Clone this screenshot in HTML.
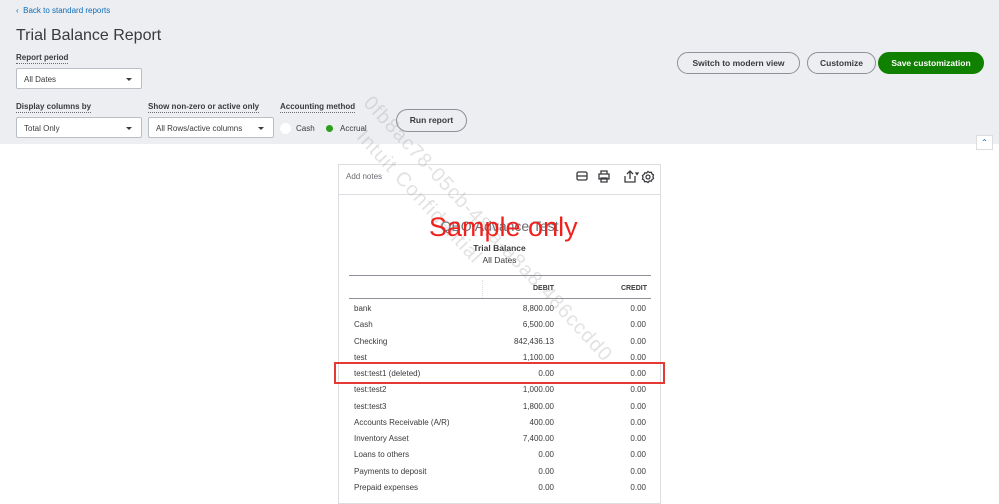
<!DOCTYPE html>
<html><head><meta charset="utf-8"><style>
*{box-sizing:border-box;margin:0;padding:0}
body{width:999px;height:493px;overflow:hidden;background:#fff;font-family:"Liberation Sans",sans-serif;color:#393a3d;position:relative}
.top{position:absolute;left:0;top:0;width:999px;height:144px;background:#eceef1}
.a{position:absolute;white-space:nowrap}
.lbl{font-size:8px;font-weight:bold;color:#393a3d;border-bottom:1px dotted #6b6c72;padding-bottom:1px}
.sel{position:absolute;background:#fff;border:1px solid #babec5;border-radius:2px;height:21px;font-size:8px;padding:6px 7px;color:#393a3d}
.sel:after{content:"";position:absolute;right:9px;top:9px;border:3px solid transparent;border-top:3px solid #393a3d}
.btn{position:absolute;border:1px solid #8d9096;border-radius:12px;height:22px;font-size:8.5px;font-weight:bold;text-align:center;line-height:20px;color:#393a3d;background:#eceef1}
.rep{position:absolute;left:338px;top:164px;width:323px;height:340px;border:1px solid #dcdde0;background:#fff}
.row{position:absolute;left:354px;width:292px;font-size:8px;color:#393a3d;height:12px}
.row span{position:absolute;top:0}
.wm{font-size:20px;color:rgba(160,160,160,.3);transform-origin:0 0;transform:rotate(47deg);letter-spacing:1px}
</style></head><body>
<div class="top"></div>
<div class="a" style="left:16px;top:6px;font-size:8px;color:#0d6eb8">&#8249;&nbsp; Back to standard reports</div>
<div class="a" style="left:16px;top:27px;font-size:16px;color:#393a3d">Trial Balance Report</div>
<div class="a lbl" style="left:16px;top:53px">Report period</div>
<div class="sel" style="left:16px;top:68px;width:126px">All Dates</div>
<div class="a lbl" style="left:16px;top:102px">Display columns by</div>
<div class="sel" style="left:16px;top:117px;width:126px">Total Only</div>
<div class="a lbl" style="left:148px;top:102px">Show non-zero or active only</div>
<div class="sel" style="left:148px;top:117px;width:126px">All Rows/active columns</div>
<div class="a lbl" style="left:280px;top:102px">Accounting method</div>
<div class="a" style="left:280px;top:123px;width:11px;height:11px;border-radius:50%;background:#fff"></div>
<div class="a" style="left:296px;top:124px;font-size:8px">Cash</div>
<div class="a" style="left:326px;top:125px;width:7px;height:7px;border-radius:50%;background:#2ca01c"></div>
<div class="a" style="left:340px;top:124px;font-size:8px">Accrual</div>
<div class="btn" style="left:396px;top:109px;width:71px;height:23px">Run report</div>
<div class="btn" style="left:677px;top:52px;width:123px">Switch to modern view</div>
<div class="btn" style="left:807px;top:52px;width:69px">Customize</div>
<div class="btn" style="left:878px;top:52px;width:106px;background:#108000;border-color:#108000;color:#fff">Save customization</div>
<div class="a" style="left:976px;top:135px;width:17px;height:15px;background:#fff;border:1px solid #dcdde0;font-size:8px;color:#0d6eb8;text-align:center;line-height:14px">&#8963;</div>
<div class="rep"></div>
<div class="a" style="left:338px;top:194px;width:323px;border-top:1px solid #dcdde0"></div>
<div class="a" style="left:346px;top:172px;font-size:8px;color:#6b6c72">Add notes</div>
<svg class="a" style="left:575px;top:169px" width="82" height="16" viewBox="0 0 82 16" fill="none" stroke="#393a3d" stroke-width="1.3">
<rect x="2" y="3" width="10" height="8" rx="1.5"/><path d="M2 7h10"/>
<path d="M26 5V2h6v3M24 5h10v5H24zM26 9h6v4h-6z"/>
<path d="M50 7v6h10V7M55 10V2M52 5l3-3 3 3M61 4l2 0-1 1.5z"/>
<circle cx="73" cy="8" r="2"/><path d="M73 2.5l1.5 1 1.8-.3.7 1.7 1.5 1-.5 1.8.5 1.8-1.5 1-.7 1.7-1.8-.3L73 13.5l-1.5-1-1.8.3-.7-1.7-1.5-1 .5-1.8-.5-1.8 1.5-1 .7-1.7 1.8.3z"/>
</svg>
<div class="a" style="left:338px;top:218px;width:323px;text-align:center;font-size:14px;color:#6b6c72">QBO Advance Test</div>
<div class="a" style="left:338px;top:243px;width:323px;text-align:center;font-size:8.5px;font-weight:bold">Trial Balance</div>
<div class="a" style="left:338px;top:255px;width:323px;text-align:center;font-size:8.5px">All Dates</div>
<div class="a" style="left:349px;top:275px;width:302px;border-top:1px solid #8d9096"></div>
<div class="a" style="left:482px;top:280px;height:18px;border-left:1px dotted #dcdde0"></div>
<div class="a" style="left:349px;top:298px;width:302px;border-top:1px solid #8d9096"></div>
<div class="a" style="left:490px;top:285px;width:64px;text-align:right;font-size:7px;font-weight:bold">DEBIT</div>
<div class="a" style="left:590px;top:285px;width:57px;text-align:right;font-size:7px;font-weight:bold">CREDIT</div>
<div class="row" style="top:304px"><span style="left:0">bank</span><span style="right:92px">8,800.00</span><span style="right:0">0.00</span></div>
<div class="row" style="top:320px"><span style="left:0">Cash</span><span style="right:92px">6,500.00</span><span style="right:0">0.00</span></div>
<div class="row" style="top:337px"><span style="left:0">Checking</span><span style="right:92px">842,436.13</span><span style="right:0">0.00</span></div>
<div class="row" style="top:353px"><span style="left:0">test</span><span style="right:92px">1,100.00</span><span style="right:0">0.00</span></div>
<div class="row" style="top:369px"><span style="left:0">test:test1 (deleted)</span><span style="right:92px">0.00</span><span style="right:0">0.00</span></div>
<div class="row" style="top:385px"><span style="left:0">test:test2</span><span style="right:92px">1,000.00</span><span style="right:0">0.00</span></div>
<div class="row" style="top:402px"><span style="left:0">test:test3</span><span style="right:92px">1,800.00</span><span style="right:0">0.00</span></div>
<div class="row" style="top:418px"><span style="left:0">Accounts Receivable (A/R)</span><span style="right:92px">400.00</span><span style="right:0">0.00</span></div>
<div class="row" style="top:434px"><span style="left:0">Inventory Asset</span><span style="right:92px">7,400.00</span><span style="right:0">0.00</span></div>
<div class="row" style="top:450px"><span style="left:0">Loans to others</span><span style="right:92px">0.00</span><span style="right:0">0.00</span></div>
<div class="row" style="top:467px"><span style="left:0">Payments to deposit</span><span style="right:92px">0.00</span><span style="right:0">0.00</span></div>
<div class="row" style="top:483px"><span style="left:0">Prepaid expenses</span><span style="right:92px">0.00</span><span style="right:0">0.00</span></div>
<div class="a" style="left:334px;top:362px;width:331px;height:22px;border:2px solid #e53935"></div>
<div class="a wm" style="left:375px;top:92px">0fb8ac78-05cb-48fa-a8a8-486ccdd0</div>
<div class="a wm" style="left:368px;top:126px">Intuit Confidential</div>
<div class="a" style="left:429px;top:212px;font-size:27px;color:#f0201c">Sample only</div>
</body></html>
